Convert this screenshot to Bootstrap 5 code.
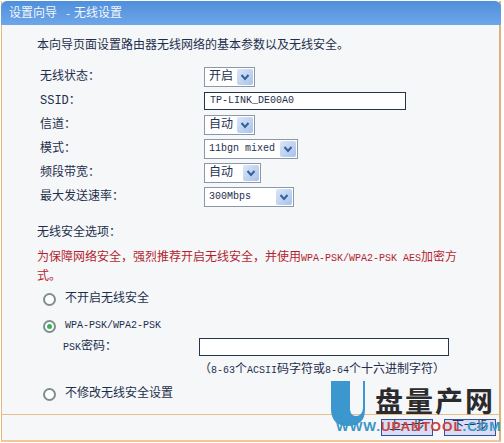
<!DOCTYPE html>
<html lang="zh">
<head>
<meta charset="utf-8">
<title>设置向导 - 无线设置</title>
<link href="https://cdn.jsdelivr.net/npm/bootstrap@5.3.0/dist/css/bootstrap.min.css" rel="stylesheet">
<style>
html,body{margin:0;width:504px;height:443px;overflow:hidden;background:#fff;}
body{font:12px/16px "Liberation Mono","Noto Sans CJK SC",monospace;color:#1d2f4c;}
.frame{position:relative;width:504px;height:443px;padding:1px 3px 0 1px;}
.shell{height:441px;border-left:1px solid #e8b876;border-right:2px solid #dcb27a;border-bottom:2px solid #f0c99a;background:#f6f7f9;display:flex;flex-direction:column;}
.titlebar{height:24px;margin-left:-1px;margin-right:-2px;background:linear-gradient(#4f8fdc,#6ea6e8);border-radius:6px 6px 0 0;color:#f2f6fb;padding:5px 0 0 8px;font-size:12px;line-height:16px;white-space:nowrap;}
.titlebar span{font-size:10px;padding:0 3px 0 8px;}
.content{flex:1;min-height:0;padding:6px 0 0 35px;}
.intro{height:32px;padding-top:7px;line-height:16px;}
.fld{display:flex;align-items:center;height:24px;padding-left:3px;}
.fld-first{margin-top:2px;}
.lbl{width:164px;flex:none;}
.sel{display:flex;align-items:center;justify-content:space-between;height:20px;border:1px solid #8a98a8;background:#fff;padding:0 1px 0 4px;font-size:12px;}
.arrow{width:16px;height:16px;background:linear-gradient(135deg,#dbe6f8,#a9c2ea);display:flex;align-items:center;justify-content:center;border-radius:2px;}
.w51{width:51px;}.w95{width:94px;}.w57b{width:57px;}.w90{width:90px;}
.txt{font-size:10px;line-height:1;}
.tinput{height:18px;border:1px solid #26344c;background:#fff;padding:0 5px;line-height:16px;}
.wssid{width:202px;}.wpsk{width:250px;}
.sechead{margin-top:12px;height:24px;line-height:24px;}
.warn{color:#b31f2e;width:430px;line-height:19px;margin-top:4px;}
.optrow{display:flex;align-items:center;height:20px;padding-left:6px;gap:9px;}
.gap-a{margin-top:2px;}.gap-b{margin-top:7px;}
.rad{width:13px;height:13px;border:2px solid #7d8f8c;border-radius:50%;background:#fff;flex:none;display:flex;align-items:center;justify-content:center;}
.rad i{display:block;width:5px;height:5px;border-radius:50%;background:#3fae55;}
.pskrow{display:flex;align-items:center;height:22px;padding-left:26px;}
.pskrow .lbl2{width:136px;flex:none;}
.hint{padding-left:162px;height:26px;line-height:24px;white-space:nowrap;font-size:12px;}
.foot{flex:none;height:26px;border-top:1px solid #e6bd8c;display:flex;justify-content:flex-end;align-items:center;gap:11px;padding-right:3px;}
.fbtn{width:52px;height:17px;line-height:15px;border:1px solid #3a4f96;background:#d8dcf4;text-align:center;padding:0;border-radius:0;font-size:12px;color:#25365c;}
.brand{position:absolute;left:330px;top:380px;width:170px;height:60px;pointer-events:none;}
.ushape{position:absolute;left:0;top:0;}
.bname{position:absolute;left:45px;top:2px;font:700 28px/36px "Noto Sans CJK SC",sans-serif;color:#2b2b2e;letter-spacing:2px;white-space:nowrap;}
.burl{position:absolute;left:6px;top:39px;font:700 13.5px/16px "Liberation Sans",sans-serif;letter-spacing:.9px;color:#3a96c6;white-space:nowrap;}
.burl em{font-style:normal;color:#c5443e;}
</style>
</head>
<body>
<div class="frame">
  <div class="shell">
    <div class="titlebar">设置向导<span>-</span>无线设置</div>
    <div class="content">
      <div class="intro">本向导页面设置路由器无线网络的基本参数以及无线安全。</div>
      <div class="fld fld-first"><span class="lbl">无线状态：</span><span class="sel w51">开启<span class="arrow"><svg width="10" height="8" viewBox="0 0 10 8"><path d="M1.5 2 5 6 8.500 2" fill="none" stroke="#33619f" stroke-width="2"/></svg></span></span></div>
      <div class="fld"><span class="lbl">SSID：</span><span class="tinput wssid txt">TP-LINK_DE00A0</span></div>
      <div class="fld"><span class="lbl">信道：</span><span class="sel w51">自动<span class="arrow"><svg width="10" height="8" viewBox="0 0 10 8"><path d="M1.5 2 5 6 8.500 2" fill="none" stroke="#33619f" stroke-width="2"/></svg></span></span></div>
      <div class="fld"><span class="lbl">模式：</span><span class="sel w95 txt">11bgn mixed<span class="arrow"><svg width="10" height="8" viewBox="0 0 10 8"><path d="M1.5 2 5 6 8.500 2" fill="none" stroke="#33619f" stroke-width="2"/></svg></span></span></div>
      <div class="fld"><span class="lbl">频段带宽：</span><span class="sel w57b">自动<span class="arrow"><svg width="10" height="8" viewBox="0 0 10 8"><path d="M1.5 2 5 6 8.500 2" fill="none" stroke="#33619f" stroke-width="2"/></svg></span></span></div>
      <div class="fld"><span class="lbl">最大发送速率：</span><span class="sel w90 txt">300Mbps<span class="arrow"><svg width="10" height="8" viewBox="0 0 10 8"><path d="M1.5 2 5 6 8.500 2" fill="none" stroke="#33619f" stroke-width="2"/></svg></span></span></div>
      <div class="sechead">无线安全选项：</div>
      <div class="warn">为保障网络安全，强烈推荐开启无线安全，并使用<span class="txt">WPA-PSK/WPA2-PSK AES</span>加密方式。</div>
      <div class="optrow gap-a"><span class="rad"></span><span>不开启无线安全</span></div>
      <div class="optrow gap-b"><span class="rad"><i></i></span><span class="txt">WPA-PSK/WPA2-PSK</span></div>
      <div class="pskrow"><span class="lbl2"><span class="txt">PSK</span>密码：</span><span class="tinput wpsk"></span></div>
      <div class="hint">（<span class="txt">8-63</span>个<span class="txt">ACSII</span>码字符或<span class="txt">8-64</span>个十六进制字符）</div>
      <div class="optrow"><span class="rad"></span><span>不修改无线安全设置</span></div>
    </div>
    <div class="foot"><button type="button" class="btn fbtn">上一步</button><button type="button" class="btn fbtn">下一步</button></div>
  </div>
  <div class="brand">
    <svg class="ushape" width="40" height="48" viewBox="0 0 40 48"><path d="M1 1H20V28C20 33 22 36 26 36 30 36 33 33 33 27V1H35V30C35 41 28 46 18 46 7 46 1 40 1 29Z" fill="#3b97cd"/></svg>
    <div class="bname">盘量产网</div>
    <div class="burl">WWW.<em>UPANTOOL</em>.COM</div>
  </div>
</div>
</body>
</html>
